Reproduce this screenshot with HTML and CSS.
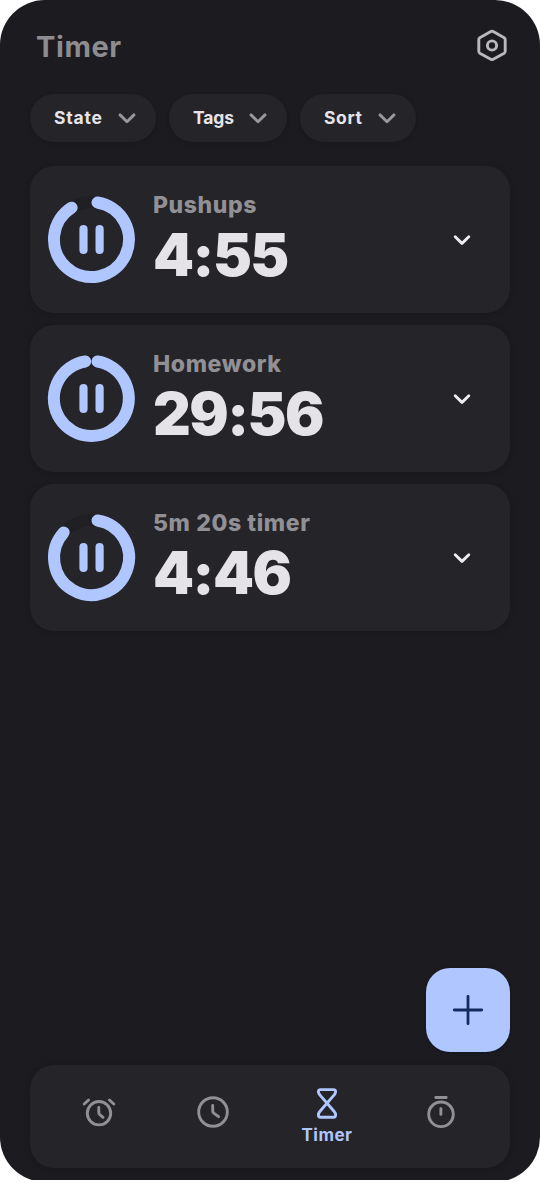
FILE: index.html
```html
<!DOCTYPE html>
<html lang="en">
<head>
<meta charset="utf-8">
<title>Timer</title>
<link rel="stylesheet" href="styles.css">
</head>
<body>
<div class="screen">
<main class="app">
  <header class="header">
    <h1 class="title">Timer</h1>
    <svg class="settings" width="36" height="36" viewBox="0 0 36 36"><path d="M16.8 3.6Q18 2.9 19.2 3.6L30.2 9.8Q31.2 10.4 31.2 11.7V23.3Q31.2 24.6 30.2 25.2L19.2 31.2Q18 31.9 16.8 31.2L5.8 25.2Q4.8 24.6 4.8 23.3V11.7Q4.8 10.4 5.8 9.8Z"/><circle cx="18" cy="17.5" r="4.6"/></svg>
  </header>
  <div class="filters">
    <button class="chip chip-state"><span class="chip-label">State</span><svg class="chev" width="18" height="12" viewBox="0 0 18 12"><path d="M2 2.9L9 9.7L16 2.9"/></svg></button>
    <button class="chip chip-tags"><span class="chip-label">Tags</span><svg class="chev" width="18" height="12" viewBox="0 0 18 12"><path d="M2 2.9L9 9.7L16 2.9"/></svg></button>
    <button class="chip chip-sort"><span class="chip-label">Sort</span><svg class="chev" width="18" height="12" viewBox="0 0 18 12"><path d="M2 2.9L9 9.7L16 2.9"/></svg></button>
  </div>
  <section class="timers">
    <article class="card">
      <svg class="ring" width="87" height="87" viewBox="0 0 87 87"><circle class="track" cx="43.5" cy="43.5" r="37.5"/><path class="progress" d="M49.5 6.5A37.5 37.5 0 1 1 23.6 11.7"/><path class="pause" d="M35.5 33.2V54M51.6 33.2V54"/></svg>
      <div class="info"><h2 class="name">Pushups</h2><div class="time">4:55</div></div>
      <svg class="expand" width="20" height="14" viewBox="0 0 20 14"><path d="M3.2 3.8L10 10.4L16.8 3.8"/></svg>
    </article>
    <article class="card">
      <svg class="ring" width="87" height="87" viewBox="0 0 87 87"><circle class="track" cx="43.5" cy="43.5" r="37.5"/><path class="progress" d="M49.5 6.5A37.5 37.5 0 1 1 37.2 6.5"/><path class="pause" d="M35.5 33.2V54M51.6 33.2V54"/></svg>
      <div class="info"><h2 class="name">Homework</h2><div class="time">29:56</div></div>
      <svg class="expand" width="20" height="14" viewBox="0 0 20 14"><path d="M3.2 3.8L10 10.4L16.8 3.8"/></svg>
    </article>
    <article class="card">
      <svg class="ring" width="87" height="87" viewBox="0 0 87 87"><circle class="track" cx="43.5" cy="43.5" r="37.5"/><path class="progress" d="M49.5 6.5A37.5 37.5 0 1 1 15.7 18.4"/><path class="pause" d="M35.5 33.2V54M51.6 33.2V54"/></svg>
      <div class="info"><h2 class="name">5m 20s timer</h2><div class="time">4:46</div></div>
      <svg class="expand" width="20" height="14" viewBox="0 0 20 14"><path d="M3.2 3.8L10 10.4L16.8 3.8"/></svg>
    </article>
  </section>
  <button class="add" aria-label="Add timer"><svg width="36" height="36" viewBox="0 0 36 36"><path d="M18 4.3V31.7M4.3 18H31.7"/></svg></button>
  <nav class="nav">
    <a class="tab"><svg width="36" height="36" viewBox="0 0 36 36"><circle cx="18" cy="19.2" r="11.7"/><path d="M17.8 13.5V18.4Q17.8 19.8 18.8 20.7L22 23.4M3.2 10L7.6 6M28.4 6L32.8 10"/></svg></a>
    <a class="tab"><svg width="36" height="36" viewBox="0 0 36 36"><circle cx="18" cy="18" r="14.3"/><path d="M17.7 11.4V17Q17.7 18.2 18.7 19.1L23.6 22.6"/></svg></a>
    <a class="tab active"><svg width="36" height="36" viewBox="0 0 36 36"><path d="M11.5 4.6H24.5Q26.6 4.6 26.6 6.8Q26.6 8.5 25 10.1L11 26.2Q9.4 28 9.4 30Q9.4 32.2 11.5 32.2H24.5Q26.6 32.2 26.6 30Q26.6 28 25 26.2L11 10.1Q9.4 8.5 9.4 6.8Q9.4 4.6 11.5 4.6Z"/></svg><span class="tab-label">Timer</span></a>
    <a class="tab"><svg width="36" height="36" viewBox="0 0 36 36"><circle cx="18" cy="20.3" r="12.3"/><path d="M12.8 3.5H23.2M17.9 14.6V20.4"/></svg></a>
  </nav>
</main>
</div>
</body>
</html>
```
FILE: styles.css
```css
* { box-sizing: border-box; }
body { margin: 0; background: #fff; font-family: Inter, Roboto, sans-serif; font-weight: 700; }
svg { display: block; flex: none; fill: none; stroke-linecap: round; stroke-linejoin: round; overflow: visible; }
button { font: inherit; border: 0; margin: 0; padding: 0; }
.screen { width: 540px; height: 1180px; overflow: hidden; }
.app { width: 540px; height: 1182px; background: #1c1b1f; border-radius: 45px; padding: 26px 30px 14px; display: flex; flex-direction: column; }
.header { display: flex; justify-content: space-between; height: 40px; align-items: center; padding: 0 0 0 6px; }
.title { margin: 0; padding-top: 2px; color: #8d8c91; font-size: 29px; line-height: 38px; letter-spacing: 0.6px; }
.settings { stroke: #b9b8bd; stroke-width: 2.9; }
.filters { display: flex; gap: 13px; margin-top: 28px; }
.chip { height: 48px; border-radius: 24px; background: #252429; color: #e6e4ea; padding: 0 20px 0 24px; display: flex; justify-content: space-between; align-items: center; font-size: 17.5px; box-shadow: 0 1px 3px #19181c; }
.chip-label { line-height: 20px; padding-bottom: 1px; }
.chip-state { width: 126px; letter-spacing: 0.8px; }
.chip-tags { width: 118px; letter-spacing: -0.1px; }
.chip-sort { width: 116px; letter-spacing: 0.6px; }
.chev { stroke: #99989d; stroke-width: 2.9; }
.timers { display: flex; flex-direction: column; gap: 12px; margin-top: 24px; }
.card { height: 147px; border-radius: 24px; background: #252429; display: flex; align-items: center; padding: 0 38px 0 18px; box-shadow: 0 1px 4px #19181c; }
.ring { stroke-width: 12; }
.track { stroke: #202024; }
.progress { stroke: #b0c6ff; }
.pause { stroke: #b0c6ff; stroke-width: 8.2; }
.info { margin-left: 18px; flex: 1; height: 98px; }
.name { margin: 0; color: #919095; font-size: 23px; line-height: 29px; font-weight: 800; letter-spacing: 0.6px; white-space: nowrap; }
.time { color: #e5e2e8; font-size: 58.5px; line-height: 70px; font-weight: 900; letter-spacing: -1.5px; white-space: nowrap; }
.expand { stroke: #eeecf1; stroke-width: 2.9; }
.add { width: 84px; height: 84px; border-radius: 24px; background: #b0c6ff; align-self: flex-end; margin-top: auto; display: grid; place-items: center; box-shadow: 0 1px 3px #111525; }
.add svg { stroke: #152b60; stroke-width: 2.8; }
.nav { height: 103px; margin-top: 13px; border-radius: 24px; background: #252429; display: grid; grid-template-columns: repeat(4, 114px); justify-content: center; box-shadow: 0 1px 4px #19181c; flex: none; }
.tab { display: flex; flex-direction: column; align-items: center; padding-top: 29px; }
.tab svg { stroke: #919095; stroke-width: 2.9; }
.tab.active { padding-top: 20px; color: #b0c6ff; }
.active svg { stroke: #b0c6ff; }
.tab-label { font-size: 17px; line-height: 20px; margin-top: 4px; letter-spacing: 0.5px; }
```
